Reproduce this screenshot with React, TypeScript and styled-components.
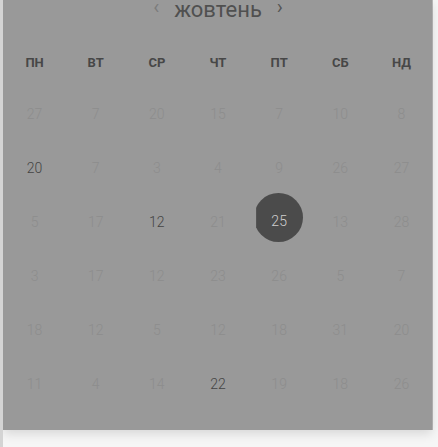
import React from "react";
import styled, { createGlobalStyle } from "styled-components";

const Global = createGlobalStyle`
  html, body { margin: 0; padding: 0; background: #f6f6f6; }
  body { font-family: Roboto, "Noto Sans", sans-serif; overflow: hidden; }
`;

const Frame = styled.div`
  width: 438px;
  height: 447px;
  display: flex;
  background: #f6f6f6;
  border-left: 3px solid #d4d4d4;
  box-sizing: border-box;
  overflow: hidden;
`;

const Column = styled.div`
  width: 429px;
  display: flex;
  flex-direction: column;
`;

const Panel = styled.div`
  height: 430px;
  background: #999999;
  box-shadow: 0 4px 10px rgba(0, 0, 0, 0.12), 1px 0 0 #b8b8b8;
  display: flex;
  flex-direction: column;
  padding-left: 1px;
  box-sizing: border-box;
  overflow: hidden;
`;

const Header = styled.div`
  height: 28px;
  margin-top: -4px;
  margin-bottom: 13px;
  display: flex;
  align-items: center;
  justify-content: center;
  gap: 15px;
`;

const Chevron = styled.span<{ $dim?: boolean }>`
  font-size: 20px;
  line-height: 28px;
  color: ${(p) => (p.$dim ? "#7c7c7c" : "#555555")};
  margin-top: -6px;
`;

const Month = styled.span`
  font-size: 22px;
  line-height: 28px;
  color: #505050;
`;

const Grid = styled.div`
  display: grid;
  grid-template-columns: repeat(7, 1fr);
`;

const WeekDay = styled.div`
  height: 50px;
  display: flex;
  align-items: center;
  justify-content: center;
  font-size: 13px;
  font-weight: 700;
  color: #474747;
`;

const Cell = styled.div`
  height: 54px;
  display: flex;
  align-items: center;
  justify-content: center;
  position: relative;
`;

const Day = styled.span<{ $tone: "faded" | "dark" }>`
  font-size: 14px;
  font-weight: 300;
  color: ${(p) => (p.$tone === "dark" ? "#444444" : "#8d8d8d")};
  position: relative;
`;

const Selected = styled.span`
  position: absolute;
  left: 50%;
  top: 50%;
  width: 49px;
  height: 49px;
  margin-left: -25px;
  margin-top: -29px;
  border-radius: 50%;
  background: #4b4b4b;
  clip-path: inset(0 0 0 2px);
`;

const SelectedText = styled.span`
  position: relative;
  font-size: 14px;
  font-weight: 300;
  color: #cfcfcf;
  margin-top: -3px;
`;

const weekDays = ["ПН", "ВТ", "СР", "ЧТ", "ПТ", "СБ", "НД"];

type D = { n: number; dark?: boolean; sel?: boolean };

const rows: D[][] = [
  [{ n: 27 }, { n: 7 }, { n: 20 }, { n: 15 }, { n: 7 }, { n: 10 }, { n: 8 }],
  [{ n: 20, dark: true }, { n: 7 }, { n: 3 }, { n: 4 }, { n: 9 }, { n: 26 }, { n: 27 }],
  [{ n: 5 }, { n: 17 }, { n: 12, dark: true }, { n: 21 }, { n: 25, sel: true }, { n: 13 }, { n: 28 }],
  [{ n: 3 }, { n: 17 }, { n: 12 }, { n: 23 }, { n: 26 }, { n: 5 }, { n: 7 }],
  [{ n: 18 }, { n: 12 }, { n: 5 }, { n: 12 }, { n: 18 }, { n: 31 }, { n: 20 }],
  [{ n: 11 }, { n: 4 }, { n: 14 }, { n: 22, dark: true }, { n: 19 }, { n: 18 }, { n: 26 }],
];

export default function App() {
  return (
    <>
      <Global />
      <Frame>
        <Column>
          <Panel>
            <Header>
              <Chevron $dim>‹</Chevron>
              <Month>жовтень</Month>
              <Chevron>›</Chevron>
            </Header>
            <Grid>
              {weekDays.map((w) => (
                <WeekDay key={w}>{w}</WeekDay>
              ))}
              {rows.flat().map((d, i) => (
                <Cell key={i}>
                  {d.sel ? (
                    <>
                      <Selected />
                      <SelectedText>{d.n}</SelectedText>
                    </>
                  ) : (
                    <Day $tone={d.dark ? "dark" : "faded"}>{d.n}</Day>
                  )}
                </Cell>
              ))}
            </Grid>
          </Panel>
        </Column>
      </Frame>
    </>
  );
}
